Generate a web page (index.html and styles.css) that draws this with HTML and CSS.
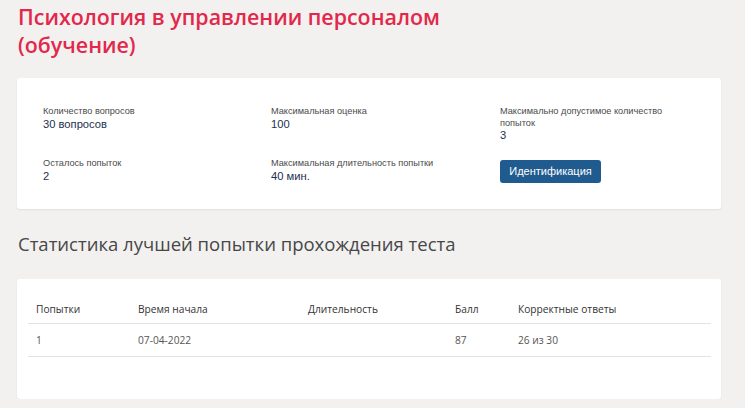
FILE: index.html
```html
<!DOCTYPE html>
<html lang="ru">
<head>
<meta charset="utf-8">
<title>Психология в управлении персоналом</title>
<link rel="stylesheet" href="styles.css">
</head>
<body>
<main class="page">
  <h1 class="title">Психология в управлении персоналом<br>(обучение)</h1>

  <section class="card info">
    <div class="info-grid">
      <div class="field">
        <div class="label">Количество вопросов</div>
        <div class="value">30 вопросов</div>
      </div>
      <div class="field">
        <div class="label">Максимальная оценка</div>
        <div class="value">100</div>
      </div>
      <div class="field narrow">
        <div class="label">Максимально допустимое количество попыток</div>
        <div class="value">3</div>
      </div>
      <div class="field">
        <div class="label">Осталось попыток</div>
        <div class="value">2</div>
      </div>
      <div class="field">
        <div class="label">Максимальная длительность попытки</div>
        <div class="value">40 мин.</div>
      </div>
      <div class="field">
        <button class="btn" type="button">Идентификация</button>
      </div>
    </div>
  </section>

  <h2 class="section-title">Статистика лучшей попытки прохождения теста</h2>

  <section class="card stats">
    <table class="table">
      <thead>
        <tr>
          <th class="c1">Попытки</th>
          <th class="c2">Время начала</th>
          <th class="c3">Длительность</th>
          <th class="c4">Балл</th>
          <th class="c5">Корректные ответы</th>
        </tr>
      </thead>
      <tbody>
        <tr>
          <td>1</td>
          <td>07-04-2022</td>
          <td></td>
          <td>87</td>
          <td>26 из 30</td>
        </tr>
      </tbody>
    </table>
  </section>
</main>
</body>
</html>
```

FILE: styles.css
```css
* { box-sizing: border-box; }

html, body {
  margin: 0;
  padding: 0;
  background: #f2f1f0;
  font-family: "Open Sans", "DejaVu Sans", sans-serif;
}

.page {
  padding: 3px 24px 0 17px;
}

.title {
  margin: 0 0 19px 1px;
  font-size: 21.4px;
  line-height: 28px;
  font-weight: 600;
  color: #e2284b;
}

.card {
  width: 704px;
  background: #fff;
  border-radius: 3px;
  box-shadow: 0 1px 2px rgba(0, 0, 0, 0.07);
}

.info {
  padding: 28px 26px 26px 26px;
}

.info-grid {
  display: grid;
  grid-template-columns: 228px 229px 180px;
  row-gap: 16px;
}

.label {
  font-family: "Liberation Sans", Arial, sans-serif;
  font-size: 9.2px;
  line-height: 11.5px;
  color: #4a4a4a;
}

.value {
  font-family: "Liberation Sans", Arial, sans-serif;
  font-size: 11.2px;
  line-height: 13px;
  color: #1d3150;
}

.btn {
  margin-top: 1px;
  width: 101px;
  height: 23px;
  border: 0;
  border-radius: 3px;
  background: #1f5b8e;
  color: #fff;
  font-family: "Liberation Sans", Arial, sans-serif;
  font-size: 11px;
  padding: 0;
}

.section-title {
  margin: 22px 0 22px 1px;
  font-size: 18.5px;
  line-height: 26px;
  font-weight: 400;
  color: #474747;
}

.stats {
  padding: 18px 10px 42px 11px;
}

.table {
  width: 100%;
  border-collapse: collapse;
  font-size: 10.2px;
}

.table th {
  text-align: left;
  font-weight: 400;
  color: #333;
  height: 27px;
  padding: 0 0 2px 8px;
  border-bottom: 1px solid #e3e3e3;
}

.table td {
  color: #555;
  height: 33px;
  padding: 0 0 1px 8px;
  border-bottom: 1px solid #e3e3e3;
}

.c1 { width: 102px; }
.c2 { width: 170px; }
.c3 { width: 147px; }
.c4 { width: 63px; }
```
